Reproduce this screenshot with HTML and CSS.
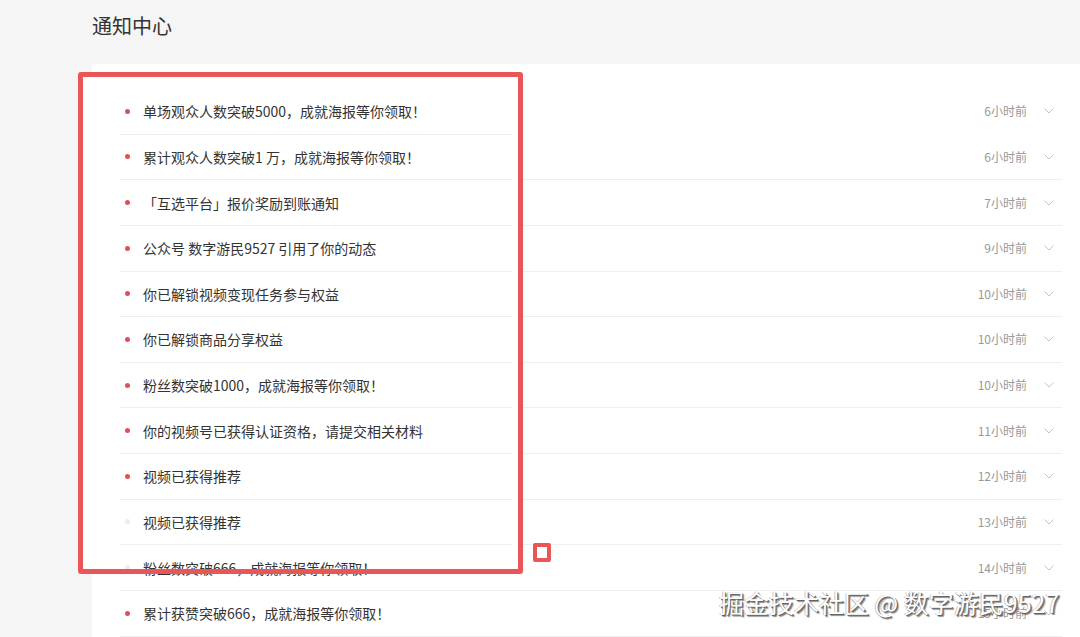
FILE: index.html
```html
<!DOCTYPE html>
<html lang="zh-CN">
<head>
<meta charset="utf-8">
<title>通知中心</title>
<link rel="stylesheet" href="styles.css">
</head>
<body>
<div class="page">
  <header class="header"><h1 class="title">通知中心</h1></header>
  <section class="panel">
    <ul class="list">
      <li class="row first"><span class="dot"></span><span class="text">单场观众人数突破5000，成就海报等你领取！</span><span class="time">6小时前</span><svg class="chev" viewBox="0 0 10 6" width="10" height="6"><polyline points="0.5,0.5 5,5 9.5,0.5"/></svg></li>
      <li class="row"><span class="dot"></span><span class="text">累计观众人数突破1 万，成就海报等你领取！</span><span class="time">6小时前</span><svg class="chev" viewBox="0 0 10 6" width="10" height="6"><polyline points="0.5,0.5 5,5 9.5,0.5"/></svg></li>
      <li class="row"><span class="dot"></span><span class="text bracket">「互选平台」报价奖励到账通知</span><span class="time">7小时前</span><svg class="chev" viewBox="0 0 10 6" width="10" height="6"><polyline points="0.5,0.5 5,5 9.5,0.5"/></svg></li>
      <li class="row"><span class="dot"></span><span class="text">公众号 数字游民9527 引用了你的动态</span><span class="time">9小时前</span><svg class="chev" viewBox="0 0 10 6" width="10" height="6"><polyline points="0.5,0.5 5,5 9.5,0.5"/></svg></li>
      <li class="row"><span class="dot"></span><span class="text">你已解锁视频变现任务参与权益</span><span class="time">10小时前</span><svg class="chev" viewBox="0 0 10 6" width="10" height="6"><polyline points="0.5,0.5 5,5 9.5,0.5"/></svg></li>
      <li class="row"><span class="dot"></span><span class="text">你已解锁商品分享权益</span><span class="time">10小时前</span><svg class="chev" viewBox="0 0 10 6" width="10" height="6"><polyline points="0.5,0.5 5,5 9.5,0.5"/></svg></li>
      <li class="row"><span class="dot"></span><span class="text">粉丝数突破1000，成就海报等你领取！</span><span class="time">10小时前</span><svg class="chev" viewBox="0 0 10 6" width="10" height="6"><polyline points="0.5,0.5 5,5 9.5,0.5"/></svg></li>
      <li class="row"><span class="dot"></span><span class="text">你的视频号已获得认证资格，请提交相关材料</span><span class="time">11小时前</span><svg class="chev" viewBox="0 0 10 6" width="10" height="6"><polyline points="0.5,0.5 5,5 9.5,0.5"/></svg></li>
      <li class="row"><span class="dot"></span><span class="text">视频已获得推荐</span><span class="time">12小时前</span><svg class="chev" viewBox="0 0 10 6" width="10" height="6"><polyline points="0.5,0.5 5,5 9.5,0.5"/></svg></li>
      <li class="row read"><span class="dot"></span><span class="text">视频已获得推荐</span><span class="time">13小时前</span><svg class="chev" viewBox="0 0 10 6" width="10" height="6"><polyline points="0.5,0.5 5,5 9.5,0.5"/></svg></li>
      <li class="row read"><span class="dot"></span><span class="text">粉丝数突破666，成就海报等你领取！</span><span class="time">14小时前</span><svg class="chev" viewBox="0 0 10 6" width="10" height="6"><polyline points="0.5,0.5 5,5 9.5,0.5"/></svg></li>
      <li class="row"><span class="dot"></span><span class="text">累计获赞突破666，成就海报等你领取！</span><span class="time">15小时前</span><svg class="chev" viewBox="0 0 10 6" width="10" height="6"><polyline points="0.5,0.5 5,5 9.5,0.5"/></svg></li>
    </ul>
  </section>
  <div class="mark-box"></div>
  <div class="mark-square"></div>
  <div class="watermark">掘金技术社区 @ 数字游民9527</div>
</div>
</body>
</html>
```
FILE: styles.css
```css
html, body {
  margin: 0;
  padding: 0;
  background: #f5f5f5;
}
body {
  font-family: "Noto Sans CJK SC", "Noto Sans", "Liberation Sans", sans-serif;
  color: #333;
}
.page {
  position: relative;
  width: 1080px;
  height: 637px;
  overflow: hidden;
}
.header {
  height: 64px;
  box-sizing: border-box;
  padding: 13px 0 0 92px;
}
.title {
  margin: 0;
  font-size: 20px;
  line-height: 26px;
  font-weight: 400;
  color: #333;
}
.panel {
  margin-left: 92px;
  background: #fff;
  padding-top: 25px;
  height: 600px;
}
.list {
  list-style: none;
  margin: 0 18px 0 28px;
  padding: 0;
}
.row {
  display: flex;
  align-items: center;
  height: 45.64px;
  box-sizing: border-box;
  border-bottom: 1px solid #efefef;
}
.row.first {
  border-image: linear-gradient(to right, #efefef 392px, transparent 392px) 1;
}
.dot {
  width: 5px;
  height: 5px;
  border-radius: 50%;
  background: #e0505c;
  margin: 0 13px 0 5px;
  flex: none;
}
.read .dot {
  background: #ececec;
}
.text {
  flex: 1;
  font-size: 14px;
  line-height: 20px;
  color: #333;
  white-space: nowrap;
}
.time {
  font-size: 12px;
  line-height: 16px;
  color: #999;
}
.chev {
  margin: 0 8px 0 17px;
  flex: none;
}
.chev polyline {
  fill: none;
  stroke: #c4c4c4;
  stroke-width: 1;
}
.mark-box {
  position: absolute;
  left: 78px;
  top: 72px;
  width: 445px;
  height: 502px;
  box-sizing: border-box;
  border: 5px solid #ea5558;
  border-radius: 3px;
  box-shadow: inset 10px 0 0 #fff, inset -6px 0 0 #fff;
}
.mark-square {
  position: absolute;
  left: 533px;
  top: 543px;
  width: 18px;
  height: 19px;
  box-sizing: border-box;
  border: 4px solid #ea5558;
  border-radius: 2px;
  background: #fff;
}
.watermark {
  position: absolute;
  left: 719px;
  top: 587px;
  font-size: 25px;
  line-height: 30px;
  color: #fff;
  white-space: nowrap;
  text-shadow: 1px 1px 0 #666, 2px 2px 1px rgba(0,0,0,0.45), -1px 0 0 rgba(0,0,0,0.25);
}
```
